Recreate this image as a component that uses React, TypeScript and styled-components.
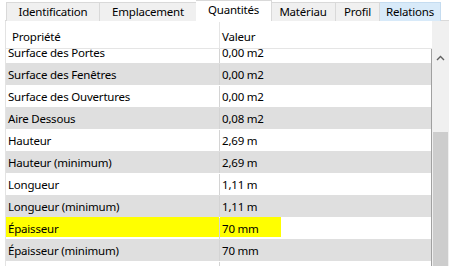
import React from "react";
import styled, { createGlobalStyle } from "styled-components";

const Global = createGlobalStyle`
  html, body { margin: 0; padding: 0; background: #ffffff; }
  body {
    width: 449px; height: 266px; overflow: hidden;
    font-family: "Noto Sans", "Open Sans", sans-serif;
    font-size: 11.5px; letter-spacing: -0.2px; color: #000;
  }
`;

const Window = styled.div`
  width: 449px;
  height: 266px;
  display: flex;
  flex-direction: column;
  overflow: hidden;
  background: #fff;
`;

const TabStrip = styled.div`
  height: 21px;
  display: flex;
  align-items: flex-end;
  padding-left: 6px;
  position: relative;
  box-sizing: border-box;
  &::after {
    content: "";
    position: absolute;
    left: 5px; right: 0; bottom: 0;
    height: 1px;
    background: #d9d9d9;
  }
`;

const Tab = styled.div<{ $w: number; $active?: boolean; $hover?: boolean }>`
  width: ${(p) => p.$w}px;
  height: ${(p) => (p.$active ? 21 : 19)}px;
  box-sizing: border-box;
  display: flex;
  align-items: center;
  justify-content: center;
  padding-bottom: ${(p) => (p.$active ? 3 : 1)}px;
  background: ${(p) => (p.$active ? "#ffffff" : p.$hover ? "#d8eaf9" : "#f0f0f0")};
  border: 1px solid ${(p) => (p.$hover ? "#c5dcf0" : "#d9d9d9")};
  border-bottom: none;
  margin-left: ${(p) => (p.$active ? -1 : 0)}px;
  margin-right: ${(p) => (p.$active ? -1 : 0)}px;
  position: relative;
  z-index: ${(p) => (p.$active ? 2 : 1)};
  white-space: nowrap;
  & + & { border-left: ${(p) => (p.$active ? "1px solid #d9d9d9" : "none")}; }
`;

const Panel = styled.div`
  flex: 1;
  margin-left: 5px;
  border-left: 1px solid #e3e3e3;
  display: flex;
  min-height: 0;
`;

const Grid = styled.div`
  width: 426px;
  display: flex;
  flex-direction: column;
  min-height: 0;
`;

const HeaderRow = styled.div`
  height: 28px;
  box-sizing: border-box;
  display: grid;
  grid-template-columns: 213px 1px 1fr;
  border-bottom: 1px solid #e5e5e5;
  background: #fff;
`;

const HeaderCell = styled.div<{ $pad?: number }>`
  display: flex;
  align-items: center;
  padding: 3px 0 0 ${(p) => p.$pad ?? 6}px;
`;

const Sep = styled.div<{ $color?: string }>`
  background: ${(p) => p.$color ?? "#e5e5e5"};
  margin-top: 1px;
`;

const Body = styled.div`
  flex: 1;
  overflow: hidden;
  border-right: 1px solid #a0a0a0;
`;

const Rows = styled.div`
  margin-top: -8px;
`;

const Row = styled.div<{ $alt: boolean }>`
  height: 22px;
  display: grid;
  grid-template-columns: 213px 1px 1fr;
  background: ${(p) => (p.$alt ? "#dfdfdf" : "#ffffff")};
`;

const Cell = styled.div<{ $pad: number; $hl?: boolean; $hlWidth?: number }>`
  display: flex;
  align-items: center;
  padding-left: ${(p) => p.$pad}px;
  white-space: nowrap;
  position: relative;
  z-index: 0;
  ${(p) =>
    p.$hl
      ? `&::before { content: ""; position: absolute; left: 0; top: 0; height: 20px; width: ${
          p.$hlWidth ? p.$hlWidth + "px" : "100%"
        }; background: #ffff00; z-index: -1; }`
      : ""}
`;

const Side = styled.div`
  width: 17px;
  display: flex;
  flex-direction: column;
  background: #f0f0f0;
`;

const Corner = styled.div`
  height: 28px;
  flex: none;
  background: #f0f0f0;
`;

const Scroll = styled.div`
  flex: 1;
  display: flex;
  flex-direction: column;
  background: #f0f0f0;
`;

const Arrow = styled.div`
  height: 17px;
  flex: none;
  display: flex;
  align-items: center;
  justify-content: center;
`;

const Track = styled.div`
  flex: 1;
  padding: 66px 1px 0 1px;
`;

const Thumb = styled.div`
  height: 100%;
  background: #cdcdcd;
`;

const tabs = [
  { label: "Identification", w: 94 },
  { label: "Emplacement", w: 97 },
  { label: "Quantités", w: 76, active: true },
  { label: "Matériau", w: 65 },
  { label: "Profil", w: 44 },
  { label: "Relations", w: 61, hover: true },
];

const rows: [string, string][] = [
  ["Surface des Portes", "0,00 m2"],
  ["Surface des Fenêtres", "0,00 m2"],
  ["Surface des Ouvertures", "0,00 m2"],
  ["Aire Dessous", "0,08 m2"],
  ["Hauteur", "2,69 m"],
  ["Hauteur (minimum)", "2,69 m"],
  ["Longueur", "1,11 m"],
  ["Longueur (minimum)", "1,11 m"],
  ["Épaisseur", "70 mm"],
  ["Épaisseur (minimum)", "70 mm"],
  ["", ""],
];

export default function App() {
  return (
    <Window>
      <Global />
      <TabStrip>
        {tabs.map((t) => (
          <Tab key={t.label} $w={t.w} $active={t.active} $hover={t.hover}>
            {t.label}
          </Tab>
        ))}
      </TabStrip>
      <Panel>
        <Grid>
          <HeaderRow>
            <HeaderCell $pad={6}>Propriété</HeaderCell>
            <Sep />
            <HeaderCell $pad={2}>Valeur</HeaderCell>
          </HeaderRow>
          <Body>
            <Rows>
              {rows.map(([k, v], i) => {
                const hl = k === "Épaisseur";
                return (
                  <Row key={i} $alt={i % 2 === 1}>
                    <Cell $pad={2} $hl={hl}>{k}</Cell>
                    <Sep $color="#d4d4d4" />
                    <Cell $pad={2} $hl={hl} $hlWidth={61}>{v}</Cell>
                  </Row>
                );
              })}
            </Rows>
          </Body>
        </Grid>
        <Side>
          <Corner />
          <Scroll>
            <Arrow>
              <svg width="9" height="6" viewBox="0 0 9 6">
                <path d="M1 5 L4.5 1.5 L8 5" fill="none" stroke="#606060" strokeWidth="1.4" />
              </svg>
            </Arrow>
            <Track>
              <Thumb />
            </Track>
          </Scroll>
        </Side>
      </Panel>
    </Window>
  );
}
